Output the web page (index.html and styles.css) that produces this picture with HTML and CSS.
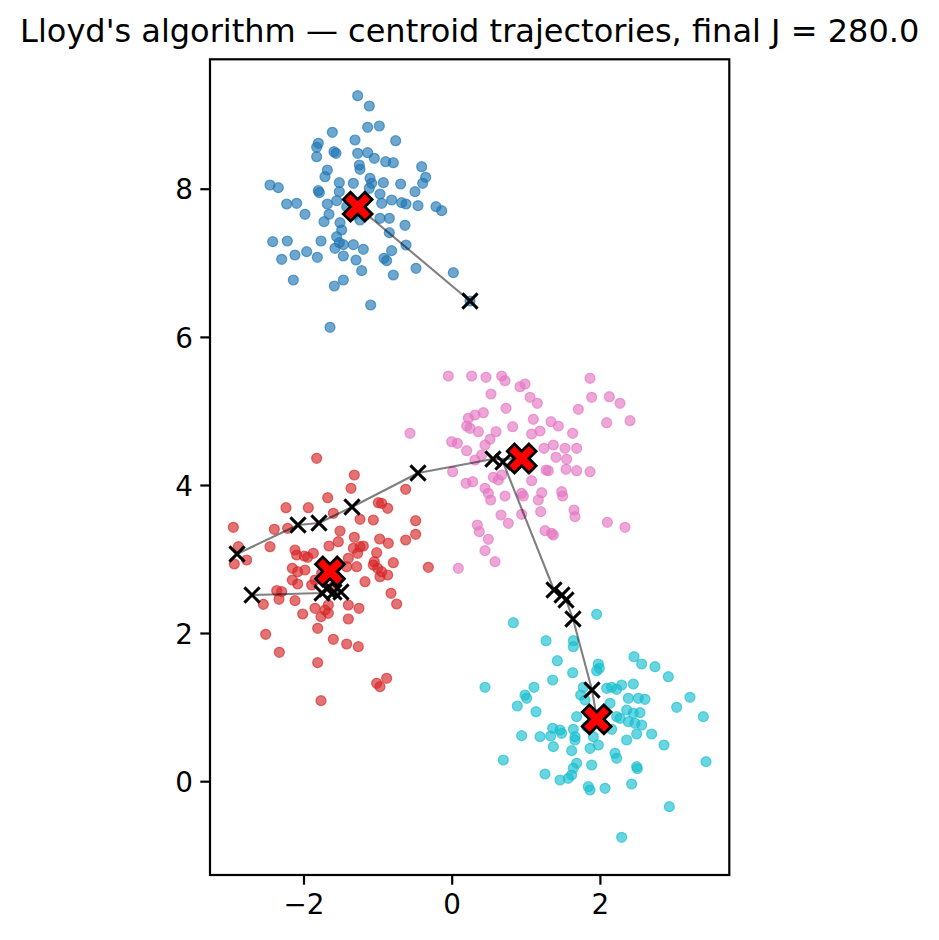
FILE: index.html
```html
<!DOCTYPE html>
<html>
<head>
<meta charset="utf-8">
<title>Lloyd's algorithm</title>
<link rel="stylesheet" href="styles.css">
</head>
<body>
<svg class="fig" width="939" height="940" viewBox="0 0 939 940">
<defs>
<path id="xm" d="M-7.6 -7.6L7.6 7.6M-7.6 7.6L7.6 -7.6"/>
<polygon id="bigx" points="-7.2,-14.4 0,-7.2 7.2,-14.4 14.4,-7.2 7.2,0 14.4,7.2 7.2,14.4 0,7.2 -7.2,14.4 -14.4,7.2 -7.2,0 -14.4,-7.2"/>
<clipPath id="axclip"><rect x="210" y="59.3" width="519.3" height="815.7"/></clipPath>
</defs>

<text class="title" x="469.7" y="42">Lloyd's algorithm — centroid trajectories, final J = 280.0</text>

<g clip-path="url(#axclip)">
<g class="pts blue" transform="translate(180 40) scale(0.33333)">
<circle cx="533" cy="167" r="15"/><circle cx="568" cy="198" r="15"/><circle cx="563" cy="262" r="15"/><circle cx="598" cy="258" r="15"/><circle cx="457" cy="277" r="15"/><circle cx="525" cy="300" r="15"/><circle cx="647" cy="302" r="15"/><circle cx="415" cy="310" r="15"/><circle cx="410" cy="322" r="15"/><circle cx="462" cy="335" r="15"/><circle cx="468" cy="340" r="15"/><circle cx="410" cy="350" r="15"/><circle cx="533" cy="340" r="15"/><circle cx="563" cy="338" r="15"/><circle cx="583" cy="355" r="15"/><circle cx="617" cy="365" r="15"/><circle cx="640" cy="368" r="15"/><circle cx="538" cy="375" r="15"/><circle cx="540" cy="388" r="15"/><circle cx="442" cy="390" r="15"/><circle cx="725" cy="380" r="15"/><circle cx="435" cy="410" r="15"/><circle cx="478" cy="428" r="15"/><circle cx="520" cy="430" r="15"/><circle cx="570" cy="415" r="15"/><circle cx="575" cy="430" r="15"/><circle cx="610" cy="428" r="15"/><circle cx="737" cy="412" r="15"/><circle cx="728" cy="430" r="15"/><circle cx="662" cy="432" r="15"/><circle cx="270" cy="435" r="15"/><circle cx="295" cy="443" r="15"/><circle cx="415" cy="452" r="15"/><circle cx="418" cy="458" r="15"/><circle cx="478" cy="455" r="15"/><circle cx="568" cy="445" r="15"/><circle cx="600" cy="462" r="15"/><circle cx="705" cy="455" r="15"/><circle cx="350" cy="490" r="15"/><circle cx="320" cy="492" r="15"/><circle cx="442" cy="492" r="15"/><circle cx="470" cy="482" r="15"/><circle cx="605" cy="490" r="15"/><circle cx="635" cy="480" r="15"/><circle cx="665" cy="488" r="15"/><circle cx="678" cy="492" r="15"/><circle cx="714" cy="497" r="15"/><circle cx="768" cy="500" r="15"/><circle cx="785" cy="512" r="15"/><circle cx="375" cy="523" r="15"/><circle cx="447" cy="523" r="15"/><circle cx="432" cy="545" r="15"/><circle cx="480" cy="548" r="15"/><circle cx="600" cy="535" r="15"/><circle cx="628" cy="535" r="15"/><circle cx="675" cy="556" r="15"/><circle cx="485" cy="570" r="15"/><circle cx="470" cy="590" r="15"/><circle cx="478" cy="608" r="15"/><circle cx="490" cy="614" r="15"/><circle cx="520" cy="614" r="15"/><circle cx="550" cy="628" r="15"/><circle cx="628" cy="578" r="15"/><circle cx="678" cy="615" r="15"/><circle cx="635" cy="632" r="15"/><circle cx="278" cy="605" r="15"/><circle cx="322" cy="603" r="15"/><circle cx="423" cy="603" r="15"/><circle cx="465" cy="625" r="15"/><circle cx="490" cy="648" r="15"/><circle cx="345" cy="645" r="15"/><circle cx="380" cy="635" r="15"/><circle cx="412" cy="652" r="15"/><circle cx="305" cy="658" r="15"/><circle cx="528" cy="660" r="15"/><circle cx="612" cy="655" r="15"/><circle cx="620" cy="662" r="15"/><circle cx="545" cy="692" r="15"/><circle cx="640" cy="705" r="15"/><circle cx="708" cy="685" r="15"/><circle cx="820" cy="698" r="15"/><circle cx="340" cy="720" r="15"/><circle cx="463" cy="738" r="15"/><circle cx="490" cy="720" r="15"/><circle cx="572" cy="795" r="15"/><circle cx="450" cy="862" r="15"/><circle cx="870" cy="783" r="15"/><circle cx="500" cy="500" r="15"/><circle cx="520" cy="525" r="15"/><circle cx="555" cy="525" r="15"/><circle cx="540" cy="540" r="15"/>
</g>

<g class="pts red" transform="translate(215 440) scale(0.33333)">
<circle cx="305" cy="55" r="15"/><circle cx="418" cy="105" r="15"/><circle cx="408" cy="145" r="15"/><circle cx="338" cy="173" r="15"/><circle cx="572" cy="148" r="15"/><circle cx="490" cy="188" r="15"/><circle cx="500" cy="190" r="15"/><circle cx="518" cy="205" r="15"/><circle cx="213" cy="203" r="15"/><circle cx="280" cy="203" r="15"/><circle cx="355" cy="220" r="15"/><circle cx="435" cy="238" r="15"/><circle cx="475" cy="240" r="15"/><circle cx="602" cy="242" r="15"/><circle cx="55" cy="262" r="15"/><circle cx="178" cy="268" r="15"/><circle cx="218" cy="265" r="15"/><circle cx="375" cy="273" r="15"/><circle cx="602" cy="283" r="15"/><circle cx="572" cy="300" r="15"/><circle cx="418" cy="292" r="15"/><circle cx="494" cy="297" r="15"/><circle cx="520" cy="310" r="15"/><circle cx="370" cy="305" r="15"/><circle cx="342" cy="318" r="15"/><circle cx="165" cy="320" r="15"/><circle cx="70" cy="320" r="15"/><circle cx="95" cy="360" r="15"/><circle cx="58" cy="372" r="15"/><circle cx="240" cy="330" r="15"/><circle cx="245" cy="345" r="15"/><circle cx="268" cy="348" r="15"/><circle cx="295" cy="340" r="15"/><circle cx="278" cy="352" r="15"/><circle cx="415" cy="325" r="15"/><circle cx="435" cy="320" r="15"/><circle cx="445" cy="318" r="15"/><circle cx="428" cy="340" r="15"/><circle cx="400" cy="355" r="15"/><circle cx="485" cy="338" r="15"/><circle cx="478" cy="365" r="15"/><circle cx="475" cy="375" r="15"/><circle cx="535" cy="368" r="15"/><circle cx="488" cy="385" r="15"/><circle cx="500" cy="395" r="15"/><circle cx="518" cy="405" r="15"/><circle cx="495" cy="410" r="15"/><circle cx="640" cy="382" r="15"/><circle cx="232" cy="385" r="15"/><circle cx="248" cy="395" r="15"/><circle cx="270" cy="390" r="15"/><circle cx="232" cy="420" r="15"/><circle cx="248" cy="432" r="15"/><circle cx="290" cy="435" r="15"/><circle cx="450" cy="425" r="15"/><circle cx="425" cy="380" r="15"/><circle cx="395" cy="380" r="15"/><circle cx="185" cy="452" r="15"/><circle cx="200" cy="455" r="15"/><circle cx="192" cy="478" r="15"/><circle cx="240" cy="482" r="15"/><circle cx="145" cy="493" r="15"/><circle cx="528" cy="460" r="15"/><circle cx="545" cy="492" r="15"/><circle cx="400" cy="495" r="15"/><circle cx="432" cy="505" r="15"/><circle cx="300" cy="505" r="15"/><circle cx="330" cy="510" r="15"/><circle cx="340" cy="520" r="15"/><circle cx="263" cy="522" r="15"/><circle cx="318" cy="530" r="15"/><circle cx="400" cy="537" r="15"/><circle cx="308" cy="565" r="15"/><circle cx="152" cy="583" r="15"/><circle cx="355" cy="598" r="15"/><circle cx="395" cy="612" r="15"/><circle cx="430" cy="620" r="15"/><circle cx="193" cy="637" r="15"/><circle cx="308" cy="668" r="15"/><circle cx="515" cy="715" r="15"/><circle cx="485" cy="730" r="15"/><circle cx="495" cy="740" r="15"/><circle cx="318" cy="782" r="15"/><circle cx="340" cy="495" r="15"/><circle cx="355" cy="440" r="15"/><circle cx="365" cy="415" r="15"/><circle cx="320" cy="400" r="15"/><circle cx="300" cy="420" r="15"/>
</g>

<g class="pts pink" transform="translate(420 360) scale(0.33333)">
<circle cx="85" cy="48" r="15"/><circle cx="155" cy="48" r="15"/><circle cx="198" cy="52" r="15"/><circle cx="245" cy="48" r="15"/><circle cx="255" cy="62" r="15"/><circle cx="300" cy="80" r="15"/><circle cx="315" cy="72" r="15"/><circle cx="510" cy="55" r="15"/><circle cx="213" cy="102" r="15"/><circle cx="330" cy="112" r="15"/><circle cx="352" cy="130" r="15"/><circle cx="515" cy="112" r="15"/><circle cx="568" cy="110" r="15"/><circle cx="600" cy="130" r="15"/><circle cx="475" cy="148" r="15"/><circle cx="190" cy="158" r="15"/><circle cx="165" cy="165" r="15"/><circle cx="145" cy="175" r="15"/><circle cx="140" cy="198" r="15"/><circle cx="150" cy="205" r="15"/><circle cx="175" cy="215" r="15"/><circle cx="258" cy="145" r="15"/><circle cx="340" cy="178" r="15"/><circle cx="393" cy="185" r="15"/><circle cx="415" cy="198" r="15"/><circle cx="560" cy="188" r="15"/><circle cx="630" cy="182" r="15"/><circle cx="278" cy="200" r="15"/><circle cx="228" cy="215" r="15"/><circle cx="210" cy="238" r="15"/><circle cx="195" cy="255" r="15"/><circle cx="95" cy="245" r="15"/><circle cx="112" cy="250" r="15"/><circle cx="140" cy="272" r="15"/><circle cx="335" cy="222" r="15"/><circle cx="360" cy="213" r="15"/><circle cx="458" cy="220" r="15"/><circle cx="400" cy="255" r="15"/><circle cx="372" cy="265" r="15"/><circle cx="435" cy="265" r="15"/><circle cx="470" cy="265" r="15"/><circle cx="408" cy="292" r="15"/><circle cx="440" cy="298" r="15"/><circle cx="165" cy="300" r="15"/><circle cx="185" cy="285" r="15"/><circle cx="98" cy="335" r="15"/><circle cx="438" cy="328" r="15"/><circle cx="470" cy="332" r="15"/><circle cx="510" cy="335" r="15"/><circle cx="385" cy="332" r="15"/><circle cx="378" cy="330" r="15"/><circle cx="335" cy="362" r="15"/><circle cx="220" cy="352" r="15"/><circle cx="235" cy="360" r="15"/><circle cx="245" cy="345" r="15"/><circle cx="138" cy="370" r="15"/><circle cx="158" cy="365" r="15"/><circle cx="195" cy="385" r="15"/><circle cx="205" cy="400" r="15"/><circle cx="212" cy="420" r="15"/><circle cx="255" cy="408" r="15"/><circle cx="305" cy="400" r="15"/><circle cx="310" cy="408" r="15"/><circle cx="365" cy="398" r="15"/><circle cx="355" cy="420" r="15"/><circle cx="425" cy="395" r="15"/><circle cx="428" cy="408" r="15"/><circle cx="362" cy="455" r="15"/><circle cx="462" cy="450" r="15"/><circle cx="465" cy="470" r="15"/><circle cx="243" cy="465" r="15"/><circle cx="305" cy="463" r="15"/><circle cx="265" cy="490" r="15"/><circle cx="562" cy="487" r="15"/><circle cx="615" cy="502" r="15"/><circle cx="172" cy="495" r="15"/><circle cx="178" cy="515" r="15"/><circle cx="205" cy="538" r="15"/><circle cx="375" cy="512" r="15"/><circle cx="395" cy="520" r="15"/><circle cx="400" cy="525" r="15"/><circle cx="195" cy="572" r="15"/><circle cx="225" cy="605" r="15"/><circle cx="115" cy="625" r="15"/><circle cx="-30" cy="220" r="15"/><circle cx="300" cy="300" r="15"/><circle cx="330" cy="320" r="15"/>
</g>

<g class="pts cyan" transform="translate(460 570) scale(0.33333)">
<circle cx="410" cy="133" r="15"/><circle cx="160" cy="158" r="15"/><circle cx="258" cy="212" r="15"/><circle cx="340" cy="212" r="15"/><circle cx="340" cy="230" r="15"/><circle cx="292" cy="272" r="15"/><circle cx="415" cy="282" r="15"/><circle cx="418" cy="295" r="15"/><circle cx="410" cy="302" r="15"/><circle cx="522" cy="260" r="15"/><circle cx="545" cy="282" r="15"/><circle cx="585" cy="290" r="15"/><circle cx="625" cy="320" r="15"/><circle cx="338" cy="308" r="15"/><circle cx="278" cy="330" r="15"/><circle cx="75" cy="352" r="15"/><circle cx="222" cy="352" r="15"/><circle cx="195" cy="375" r="15"/><circle cx="200" cy="385" r="15"/><circle cx="172" cy="408" r="15"/><circle cx="228" cy="425" r="15"/><circle cx="370" cy="352" r="15"/><circle cx="362" cy="375" r="15"/><circle cx="375" cy="390" r="15"/><circle cx="440" cy="355" r="15"/><circle cx="455" cy="352" r="15"/><circle cx="485" cy="345" r="15"/><circle cx="520" cy="342" r="15"/><circle cx="470" cy="358" r="15"/><circle cx="505" cy="385" r="15"/><circle cx="535" cy="385" r="15"/><circle cx="555" cy="388" r="15"/><circle cx="690" cy="382" r="15"/><circle cx="650" cy="412" r="15"/><circle cx="730" cy="440" r="15"/><circle cx="500" cy="420" r="15"/><circle cx="520" cy="430" r="15"/><circle cx="540" cy="428" r="15"/><circle cx="505" cy="455" r="15"/><circle cx="525" cy="460" r="15"/><circle cx="545" cy="465" r="15"/><circle cx="530" cy="492" r="15"/><circle cx="575" cy="492" r="15"/><circle cx="612" cy="525" r="15"/><circle cx="500" cy="510" r="15"/><circle cx="350" cy="440" r="15"/><circle cx="450" cy="400" r="15"/><circle cx="455" cy="478" r="15"/><circle cx="185" cy="497" r="15"/><circle cx="240" cy="500" r="15"/><circle cx="272" cy="498" r="15"/><circle cx="278" cy="475" r="15"/><circle cx="300" cy="480" r="15"/><circle cx="305" cy="490" r="15"/><circle cx="340" cy="478" r="15"/><circle cx="345" cy="500" r="15"/><circle cx="345" cy="510" r="15"/><circle cx="280" cy="530" r="15"/><circle cx="335" cy="542" r="15"/><circle cx="390" cy="535" r="15"/><circle cx="415" cy="525" r="15"/><circle cx="465" cy="550" r="15"/><circle cx="470" cy="565" r="15"/><circle cx="130" cy="570" r="15"/><circle cx="395" cy="585" r="15"/><circle cx="350" cy="580" r="15"/><circle cx="340" cy="595" r="15"/><circle cx="255" cy="612" r="15"/><circle cx="300" cy="630" r="15"/><circle cx="325" cy="625" r="15"/><circle cx="335" cy="615" r="15"/><circle cx="530" cy="590" r="15"/><circle cx="532" cy="596" r="15"/><circle cx="738" cy="575" r="15"/><circle cx="385" cy="650" r="15"/><circle cx="390" cy="660" r="15"/><circle cx="435" cy="655" r="15"/><circle cx="515" cy="642" r="15"/><circle cx="628" cy="710" r="15"/><circle cx="485" cy="802" r="15"/><circle cx="470" cy="440" r="15"/><circle cx="480" cy="445" r="15"/><circle cx="380" cy="470" r="15"/><circle cx="400" cy="500" r="15"/>
</g>

<g class="traj">
<polyline points="470,301 358,207"/>
<polyline points="237,554 298,525 319,523 352,507 418,473 493,459 522,458.5"/>
<polyline points="503,462 554,590 562,595 566,600 573,619 592,690 597,719"/>
<polyline points="252,595 322,593 327,589 334,592 341,592 330,571.5"/>
</g>

<g class="xs">
<use href="#xm" x="470" y="301"/><use href="#xm" x="358" y="207"/>
<use href="#xm" x="237" y="554"/><use href="#xm" x="298" y="525"/><use href="#xm" x="319" y="523"/><use href="#xm" x="352" y="507"/><use href="#xm" x="418" y="473"/><use href="#xm" x="493" y="459"/><use href="#xm" x="522" y="458.5"/>
<use href="#xm" x="503" y="462"/><use href="#xm" x="554" y="590"/><use href="#xm" x="562" y="595"/><use href="#xm" x="566" y="600"/><use href="#xm" x="573" y="619"/><use href="#xm" x="592" y="690"/><use href="#xm" x="597" y="719"/>
<use href="#xm" x="252" y="595"/><use href="#xm" x="322" y="593"/><use href="#xm" x="327" y="589"/><use href="#xm" x="334" y="592"/><use href="#xm" x="341" y="592"/><use href="#xm" x="330" y="571.5"/>
</g>

<g class="finals">
<use href="#bigx" x="357.7" y="206.7"/>
<use href="#bigx" x="521.7" y="458.5"/>
<use href="#bigx" x="330" y="571.5"/>
<use href="#bigx" x="596.7" y="719.3"/>
</g>
</g>

<rect class="frame" x="210" y="59.3" width="519.3" height="815.7"/>

<g class="ticks">
<line x1="200.3" y1="781.7" x2="210" y2="781.7"/>
<line x1="200.3" y1="633.5" x2="210" y2="633.5"/>
<line x1="200.3" y1="485.5" x2="210" y2="485.5"/>
<line x1="200.3" y1="337.4" x2="210" y2="337.4"/>
<line x1="200.3" y1="189.2" x2="210" y2="189.2"/>
<line x1="304" y1="875" x2="304" y2="884.7"/>
<line x1="452.2" y1="875" x2="452.2" y2="884.7"/>
<line x1="600.4" y1="875" x2="600.4" y2="884.7"/>
</g>

<g class="ylabels">
<text x="193" y="791.8">0</text>
<text x="193" y="643.6">2</text>
<text x="193" y="495.6">4</text>
<text x="193" y="347.5">6</text>
<text x="193" y="199.3">8</text>
</g>
<g class="xlabels">
<text x="304" y="914">−2</text>
<text x="452.2" y="914">0</text>
<text x="600.4" y="914">2</text>
</g>
</svg>
</body>
</html>
```

FILE: styles.css
```css
html, body {
  margin: 0;
  padding: 0;
  background: #ffffff;
}

.fig {
  display: block;
  font-family: "DejaVu Sans", "Liberation Sans", sans-serif;
}

.title {
  font-size: 32px;
  text-anchor: middle;
  fill: #000;
}

.pts {
  stroke-width: 3.6;
  fill-opacity: 0.65;
  stroke-opacity: 0.65;
}

.blue { fill: #1f77b4; stroke: #1f77b4; }
.red { fill: #d62728; stroke: #d62728; }
.pink { fill: #e377c2; stroke: #e377c2; }
.cyan { fill: #17becf; stroke: #17becf; }

.traj polyline {
  fill: none;
  stroke: #000;
  stroke-opacity: 0.5;
  stroke-width: 2.1;
  stroke-linejoin: round;
}

.xs {
  fill: none;
  stroke: #000;
  stroke-width: 3;
}

.finals {
  fill: #ff0000;
  stroke: #000;
  stroke-width: 2.8;
  stroke-linejoin: miter;
}

.frame {
  fill: none;
  stroke: #000;
  stroke-width: 2.2;
}

.ticks line {
  stroke: #000;
  stroke-width: 2.2;
}

.ylabels text,
.xlabels text {
  font-size: 27.8px;
  fill: #000;
}

.ylabels text { text-anchor: end; }
.xlabels text { text-anchor: middle; }
```
